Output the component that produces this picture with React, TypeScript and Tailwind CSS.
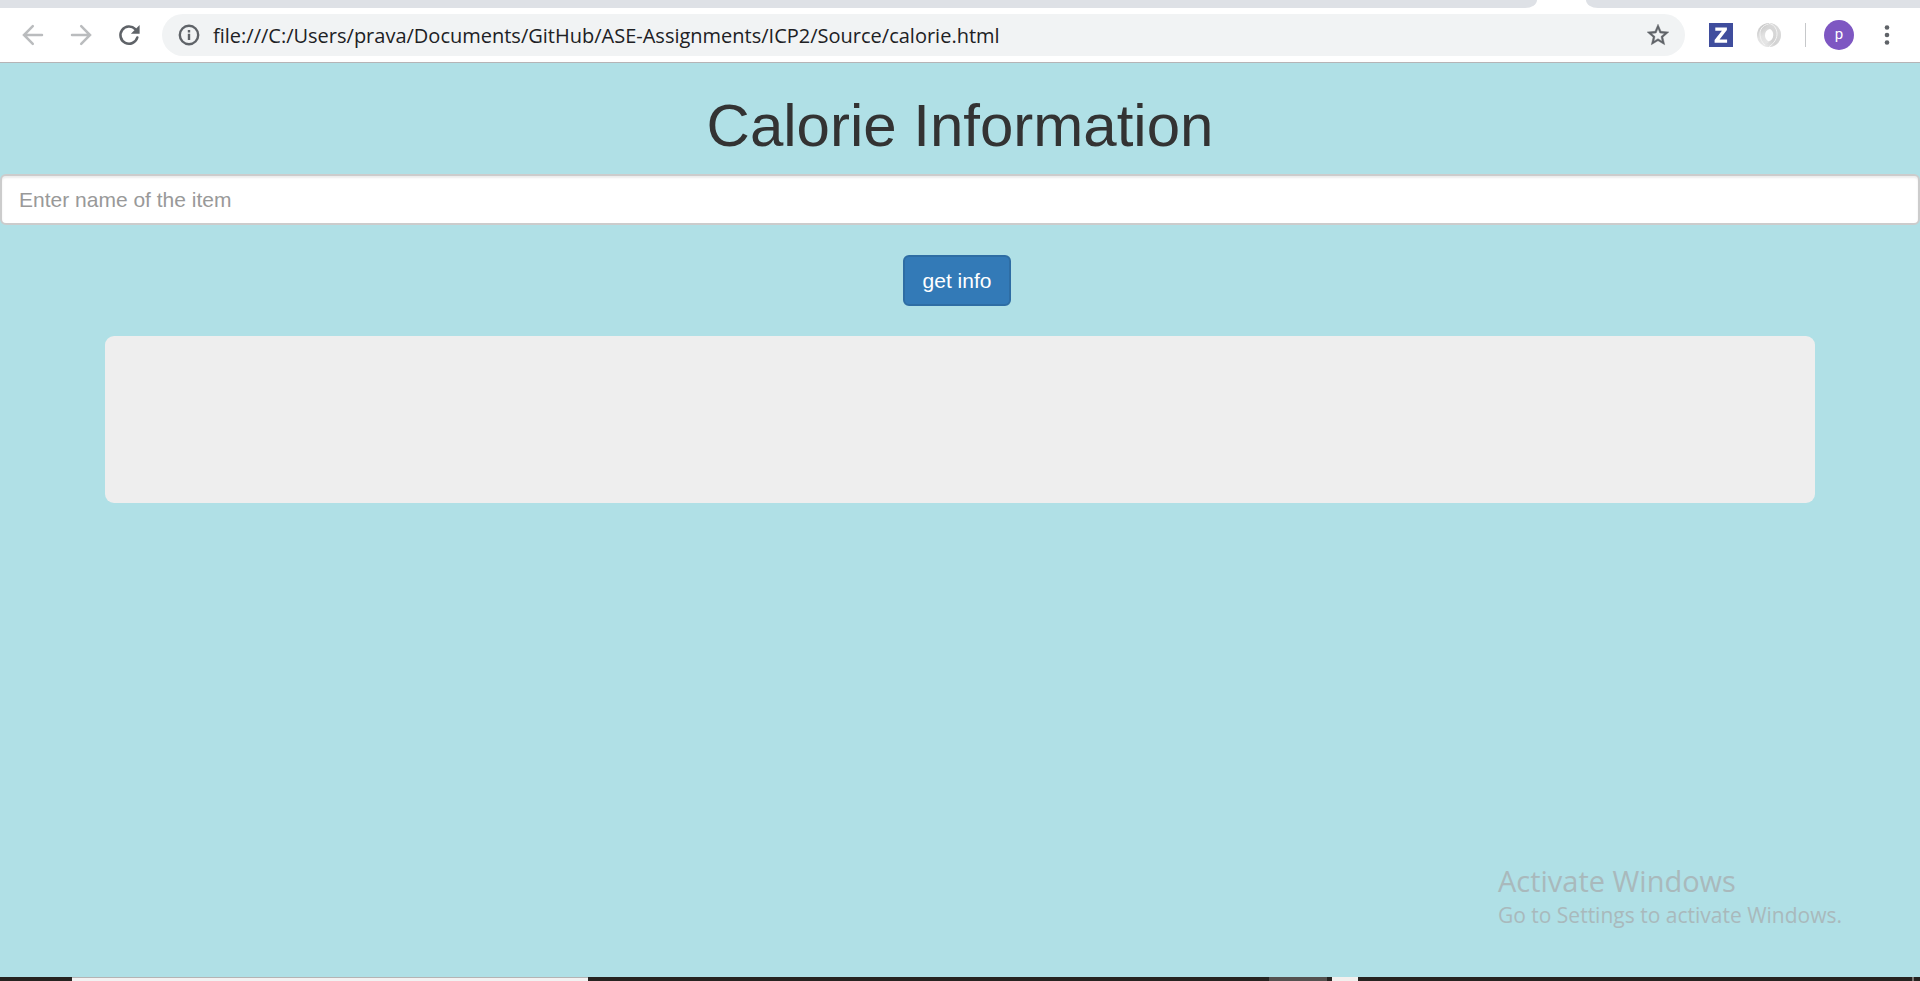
import React from 'react';

const ICON = 'h-8 w-8 shrink-0';

function BackIcon() {
  return (
    <svg viewBox="0 0 32 32" className={ICON} fill="none" stroke="#babcbe" strokeWidth="2.5" strokeLinecap="round">
      <path d="M25 16H7.5M15.8 7.200 7 16l8.800 8.800" />
    </svg>
  );
}

function ForwardIcon() {
  return (
    <svg viewBox="0 0 32 32" className={ICON} fill="none" stroke="#babcbe" strokeWidth="2.5" strokeLinecap="round">
      <path d="M7 16h17.500M16.200 7.200 25 16l-8.800 8.800" />
    </svg>
  );
}

function ReloadIcon() {
  return (
    <svg viewBox="0 0 32 32" className={ICON}>
      <path d="M24.300 18.500A8.600 8.600 0 1 1 22.300 10.200" fill="none" stroke="#5f6368" strokeWidth="2.6" strokeLinecap="round" />
      <path d="M26.600 6v8.700h-8.700z" fill="#5f6368" />
    </svg>
  );
}

function InfoIcon() {
  return (
    <svg viewBox="0 0 24 24" className="h-6 w-6 shrink-0" fill="none" stroke="#5f6368" strokeWidth="2.4">
      <circle cx="12" cy="12" r="9.2" />
      <path d="M12 10.800v6.200M12 7v2.400" />
    </svg>
  );
}

function StarIcon() {
  return (
    <svg viewBox="0 0 24 24" className="h-[26px] w-[26px]" fill="#5f6368" stroke="#5f6368" strokeWidth="0.4">
      <path d="M22 9.24l-7.19-.62L12 2 9.19 8.63 2 9.24l5.46 4.73L5.82 21 12 17.27 18.18 21l-1.63-7.03L22 9.24zM12 15.4l-3.76 2.27 1-4.28-3.32-2.88 4.38-.38L12 6.1l1.71 4.04 4.38.38-3.32 2.88 1 4.28L12 15.4z" />
    </svg>
  );
}

function ZIcon() {
  return (
    <svg viewBox="0 0 24 24" className="h-6 w-6">
      <rect width="24" height="24" fill="#3f4d9d" />
      <path d="M6.300 4.400h11.600v2.600l-7.300 9.400h7.500v3.300H5.600v-2.600l7.300-9.400H6.300z" fill="#fff" />
    </svg>
  );
}

function RingIcon() {
  return (
    <svg viewBox="0 0 24 24" className="h-6 w-6">
      <defs>
        <linearGradient id="ringA" x1="0" y1="0" x2="0.6" y2="1">
          <stop offset="0" stopColor="#bdbdbd" />
          <stop offset="0.5" stopColor="#e2e2e2" />
          <stop offset="1" stopColor="#e8e8e8" />
        </linearGradient>
        <linearGradient id="ringB" x1="1" y1="0" x2="0" y2="1">
          <stop offset="0" stopColor="#dedede" />
          <stop offset="0.6" stopColor="#d2d2d2" />
          <stop offset="1" stopColor="#f0f0f0" />
        </linearGradient>
      </defs>
      <circle cx="12" cy="12" r="12" fill="url(#ringA)" />
      <path d="M12 0c7 .5 12 5.500 12 12s-5.500 12-12 12c-3 0-5.500-1-7.500-2.800 3 .4 6-.7 8-2.700C16 15.500 17 12 16 9c-1-3-4-4.500-8-3.500C10 3 11 1.500 12 0z" fill="url(#ringB)" />
      <path d="M12 .3c4.500 1.200 7.500 4.500 8 9.700.4 5-2.500 10-8 13.700" fill="none" stroke="#f4f4f4" strokeWidth="1" />
      <path d="M11.500 1C5.500 2.500 2.500 6.500 3 12c.3 4 2 7.500 5 10" fill="none" stroke="#f2f2f2" strokeWidth="1" />
      <path d="M13 6c2 1.200 3.200 3.300 3.200 6 0 3.500-1.700 5.500-4.700 6.200C9.200 17 8 15 8 12.200 8 8.700 10 6.500 13 6z" fill="#fff" />
    </svg>
  );
}

function MenuIcon() {
  return (
    <svg viewBox="0 0 24 24" className="h-6 w-6" fill="#5f6368">
      <circle cx="12" cy="4.500" r="2.300" />
      <circle cx="12" cy="12" r="2.300" />
      <circle cx="12" cy="19.500" r="2.300" />
    </svg>
  );
}

function BrowserBar() {
  return (
    <header className="shrink-0">
      <div className="flex h-2 bg-white">
        <div className="flex-1 bg-[#dee1e6] [border-bottom-right-radius:12px_8px]" />
        <div className="w-[49px]" />
        <div className="w-[334px] bg-[#dee1e6] [border-bottom-left-radius:12px_8px]" />
      </div>
      <div className="flex h-[55px] items-center border-b border-[#b6b4b6] bg-white pr-[21px] pl-[17px]">
        <nav className="flex gap-4">
          <button type="button" aria-label="Back"><BackIcon /></button>
          <button type="button" aria-label="Forward"><ForwardIcon /></button>
          <button type="button" aria-label="Reload"><ReloadIcon /></button>
        </nav>
        <div className="ml-[17px] flex h-[42px] min-w-0 flex-1 items-center rounded-full bg-[#f1f3f4] pr-3.5 pl-[15px]">
          <InfoIcon />
          <input
            aria-label="Address"
            className="ml-3 min-w-0 flex-1 bg-transparent pt-px font-['Open_Sans','Noto_Sans',sans-serif] text-[20px] text-[#202124] outline-none"
            defaultValue="file:///C:/Users/prava/Documents/GitHub/ASE-Assignments/ICP2/Source/calorie.html"
          />
          <button type="button" aria-label="Bookmark"><StarIcon /></button>
        </div>
        <div className="ml-6 flex items-center gap-6">
          <button type="button" aria-label="Extension Z"><ZIcon /></button>
          <button type="button" aria-label="Extension"><RingIcon /></button>
          <div className="h-6 w-px bg-[#c6c8ca]" />
        </div>
        <button
          type="button"
          aria-label="Profile"
          className="ml-[18px] h-[30px] w-[30px] rounded-full bg-[#7e57c2] pb-0.5 font-[Roboto,sans-serif] text-[15px] leading-7 text-white"
        >
          p
        </button>
        <button type="button" aria-label="Menu" className="ml-[21px]"><MenuIcon /></button>
      </div>
    </header>
  );
}

function Taskbar() {
  return (
    <footer className="flex h-1 shrink-0 bg-[#262320]">
      <div className="ml-[72px] w-[516px] border-t border-[#b4b4b4] bg-[#f2f2f2]" />
      <div className="flex-1" />
      <div className="w-[58px] bg-[#555250]" />
      <div className="ml-[5px] w-[26px] bg-[#f2f0ee]" />
      <div className="ml-[554px] w-0.5 bg-[#777573]" />
      <div className="w-1.5" />
    </footer>
  );
}

export default function App() {
  return (
    <div className="flex min-h-screen flex-col bg-[#b0e0e6] font-['Liberation_Sans',Arial,sans-serif] text-[21px] leading-[30px] text-[#333]">
      <BrowserBar />
      <main className="flex flex-1 flex-col">
        <h1 className="mt-[30px] mb-[15px] text-center text-[60px] leading-[66px]">Calorie Information</h1>
        <form onSubmit={(event) => event.preventDefault()}>
          <input
            type="text"
            aria-label="Item name"
            placeholder="Enter name of the item"
            className="block h-[51px] w-full rounded-md border-2 border-[#ccc] bg-white px-[17px] shadow-[inset_0_2px_2px_rgba(0,0,0,0.075)] outline-none placeholder:text-[#999]"
          />
          <div className="mt-[30px] flex justify-center pr-1.5">
            <button type="submit" className="h-[51px] rounded-md border-2 border-[#2e6da4] bg-[#337ab7] px-[18px] text-white">
              get info
            </button>
          </div>
        </form>
        <section aria-label="Results" className="mx-[105px] mt-[30px] h-[167px] rounded-[9px] bg-[#eee]" />
        <aside className="mt-auto mr-[78px] mb-[46px] self-end font-['Open_Sans','Noto_Sans',sans-serif] text-[#a9b9bc]">
          <p className="text-[29px] leading-9">Activate Windows</p>
          <p className="text-[21px] leading-8">Go to Settings to activate Windows.</p>
        </aside>
      </main>
      <Taskbar />
    </div>
  );
}
